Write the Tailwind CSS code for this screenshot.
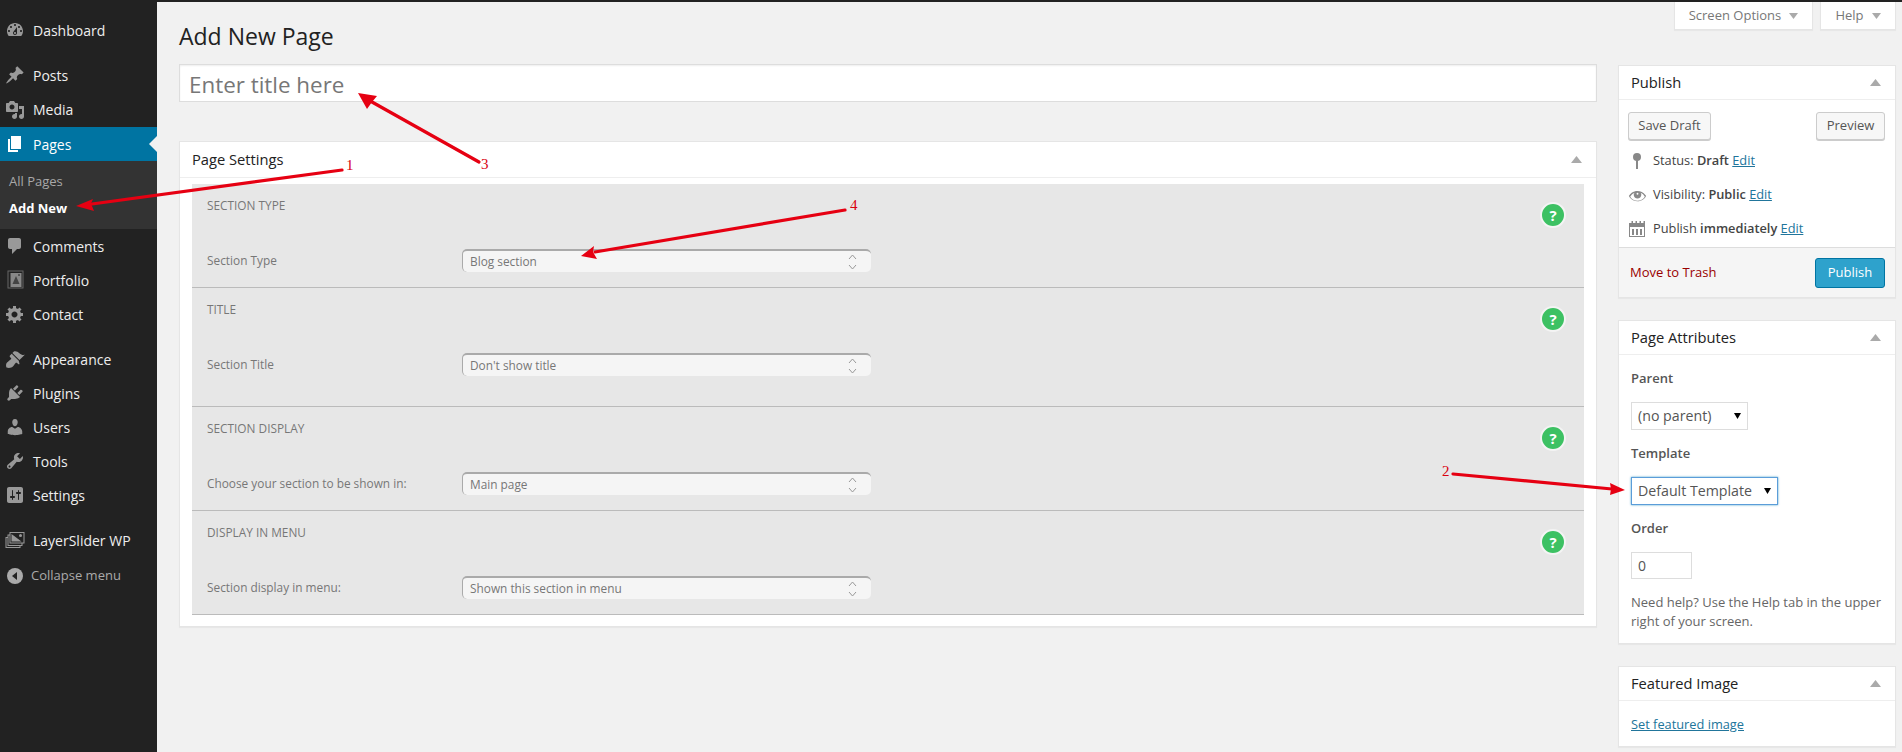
<!DOCTYPE html>
<html>
<head>
<meta charset="utf-8">
<script src="https://cdn.jsdelivr.net/npm/@tailwindcss/browser@4"></script>
</head>
<body class="m-0">
<div class="relative w-[1902px] h-[752px] overflow-hidden flex flex-col bg-[#f1f1f1] font-['Open_Sans',sans-serif] text-[13px] text-[#444]">
  <div class="h-[2px] bg-[#222] shrink-0"></div>
  <div class="flex flex-1 min-h-0">
    <!-- Sidebar -->
    <nav class="w-[157px] shrink-0 bg-[#222] text-[14px] text-[#eee] pt-[11px]">
      <div class="h-[34px] flex items-center"><span class="w-[33px] pl-[5px]"><svg class="w-[20px] h-[20px] fill-[#999]" viewBox="0 0 20 20"><path d="M3.76 16h12.48c1.1-1.37 1.76-3.11 1.76-5 0-4.42-3.58-8-8-8s-8 3.58-8 8c0 1.89.66 3.63 1.76 5zM10 4c.55 0 1 .45 1 1s-.45 1-1 1-1-.45-1-1 .45-1 1-1zM6 6c.55 0 1 .45 1 1s-.45 1-1 1-1-.45-1-1 .45-1 1-1zm8 0c.55 0 1 .45 1 1s-.45 1-1 1-1-.45-1-1 .45-1 1-1zm-5.37 5.55L12 7v6c0 1.1-.9 2-2 2s-2-.9-2-2c0-.57.24-1.08.63-1.45zM4 10c.55 0 1 .45 1 1s-.45 1-1 1-1-.45-1-1 .45-1 1-1zm12 0c.55 0 1 .45 1 1s-.45 1-1 1-1-.45-1-1 .45-1 1-1zm-5 3c0-.55-.45-1-1-1s-1 .45-1 1 .45 1 1 1 1-.45 1-1z" fill-rule="evenodd"/></svg></span>Dashboard</div>
      <div class="h-[11px]"></div>
      <div class="h-[34px] flex items-center"><span class="w-[33px] pl-[5px]"><svg class="w-[20px] h-[20px] fill-[#999]" viewBox="0 0 20 20"><path d="M10.44 3.02l1.82-1.82 6.36 6.35-1.83 1.82c-1.05-.68-2.48-.57-3.41.36l-.75.75c-.92.93-1.04 2.35-.35 3.41l-1.83 1.82-2.41-2.41-2.8 2.79c-.42.42-3.38 2.71-3.8 2.29s1.86-3.39 2.28-3.81l2.79-2.79L4.1 9.36l1.83-1.82c1.05.69 2.48.57 3.4-.36l.75-.75c.93-.92 1.05-2.35.36-3.41z"/></svg></span>Posts</div>
      <div class="h-[35px] flex items-center"><span class="w-[33px] pl-[5px]"><svg class="w-[20px] h-[20px] fill-[#999]" viewBox="0 0 20 20"><path fill-rule="evenodd" d="M13 11V4c0-.55-.45-1-1-1h-1.67L9 1H5L3.67 3H2c-.55 0-1 .45-1 1v7c0 .55.45 1 1 1h10c.55 0 1-.45 1-1zM7 4.5c1.38 0 2.5 1.12 2.5 2.5S8.38 9.5 7 9.5 4.5 8.38 4.5 7 5.62 4.5 7 4.5zM14 6h5v10.5c0 1.38-1.12 2.5-2.5 2.5S14 17.88 14 16.5s1.12-2.5 2.5-2.5c.17 0 .34.02.5.05V9h-3V6zm-4 8.05V13h2v3.5c0 1.38-1.12 2.5-2.5 2.5S7 17.88 7 16.5 8.12 14 9.5 14c.17 0 .34.02.5.05z"/></svg></span>Media</div>
      <div class="relative h-[34px] flex items-center bg-[#0074a2] text-white"><span class="w-[33px] pl-[5px]"><svg class="w-[20px] h-[20px] fill-white" viewBox="0 0 20 20"><path d="M6 15V2h10v13H6zm-1 1h8v2H3V5h2v11z"/></svg></span>Pages
        <span class="absolute right-0 top-[9px] border-y-[8px] border-r-[8px] border-y-transparent border-r-[#f1f1f1]"></span></div>
      <div class="bg-[#333] h-[68px] pt-[8px] text-[13px] pl-[9px]">
        <div class="h-[26px] leading-[24px] text-[#a8a8a8]">All Pages</div>
        <div class="h-[26px] leading-[26px] font-bold text-white">Add New</div>
      </div>
      <div class="h-[34px] flex items-center"><span class="w-[33px] pl-[5px]"><svg class="w-[20px] h-[20px] fill-[#999]" viewBox="0 0 20 20"><path d="M5 2h9c1.1 0 2 .9 2 2v7c0 1.1-.9 2-2 2h-2l-5 5v-5H5c-1.1 0-2-.9-2-2V4c0-1.1.9-2 2-2z"/></svg></span>Comments</div>
      <div class="h-[34px] flex items-center"><span class="w-[33px] pl-[5px]"><svg class="w-[20px] h-[20px]" viewBox="0 0 20 20"><rect x="3" y="1" width="15" height="17" fill="none" stroke="#666" stroke-width="1"/><rect x="5.500" y="3" width="11" height="14" fill="#888"/><path fill="#444" d="M7.500 14l3.500-8 3.500 8z"/><circle cx="14" cy="5" r="1" fill="#444"/></svg></span>Portfolio</div>
      <div class="h-[34px] flex items-center"><span class="w-[33px] pl-[5px]"><svg class="w-[20px] h-[20px] fill-[#999]" viewBox="0 0 20 20"><path fill-rule="evenodd" d="M18 12h-2.180c-.17.7-.44 1.35-.81 1.930l1.540 1.540-2.100 2.100-1.540-1.540c-.58.36-1.230.63-1.910.79V19H8v-2.180c-.68-.16-1.330-.43-1.910-.79l-1.540 1.540-2.120-2.120 1.540-1.540c-.36-.58-.63-1.230-.79-1.910H1V9.030h2.170c.16-.7.44-1.350.8-1.940L2.430 5.550l2.100-2.100 1.540 1.540c.58-.37 1.240-.64 1.930-.81V2h3v2.180c.68.16 1.330.43 1.910.79l1.540-1.540 2.120 2.120-1.540 1.540c.36.59.64 1.240.8 1.940H18V12zm-8.500 1.500c1.660 0 3-1.340 3-3s-1.340-3-3-3-3 1.340-3 3 1.340 3 3 3z"/></svg></span>Contact</div>
      <div class="h-[11px]"></div>
      <div class="h-[34px] flex items-center"><span class="w-[33px] pl-[5px]"><svg class="w-[20px] h-[20px] fill-[#999]" viewBox="0 0 20 20"><path d="M14.480 11.060L7.410 3.990l1.500-1.500c.5-.56 2.300-.47 3.510.32 1.210.8 1.430 1.280 2.910 2.100 1.180.64 2.450 1.260 4.450.85zm-.71.71L6.700 4.700 4.930 6.470c-.39.39-.39 1.020 0 1.410l1.060 1.060c.39.39.39 1.030 0 1.420-.6.6-1.430 1.110-2.210 1.690-.35.26-.7.53-1.010.84C1.430 13.230.5 15.700 1.500 18.500c2.790 1 5.270.07 6.610-1.270.31-.31.58-.66.84-1.010.58-.78 1.090-1.610 1.690-2.210.39-.39 1.030-.39 1.420 0l1.060 1.060c.39.39 1.020.39 1.410 0z"/></svg></span>Appearance</div>
      <div class="h-[34px] flex items-center"><span class="w-[33px] pl-[5px]"><svg class="w-[20px] h-[20px] fill-[#999]" viewBox="0 0 20 20"><path d="M13.110 4.360L9.870 7.600 8 5.730l3.240-3.240c.35-.34 1.050-.2 1.560.32.52.51.66 1.210.31 1.550zm-8 1.770l.91-1.120 9.010 9.010-1.190.84c-.71.71-2.630 1.160-3.820 1.160H6.140L4.900 17.260c-.59.59-1.540.59-2.120 0-.59-.58-.59-1.530 0-2.120l1.240-1.240v-3.880c0-1.130.4-3.190 1.090-3.890zm7.260 3.970l3.240-3.240c.34-.35 1.040-.21 1.550.31.52.51.66 1.210.31 1.550l-3.240 3.250z"/></svg></span>Plugins</div>
      <div class="h-[34px] flex items-center"><span class="w-[33px] pl-[5px]"><svg class="w-[20px] h-[20px] fill-[#999]" viewBox="0 0 20 20"><path d="M10 9.250c-2.270 0-2.730-3.440-2.730-3.440C7 4.020 7.820 2 9.970 2c2.160 0 2.980 2.020 2.710 3.810 0 0-.41 3.440-2.680 3.440zm0 2.570L12.720 10c2.390 0 4.520 2.330 4.520 4.530v2.490s-3.650 1.130-7.240 1.130c-3.650 0-7.240-1.130-7.240-1.130v-2.490c0-2.250 1.940-4.480 4.470-4.480z"/></svg></span>Users</div>
      <div class="h-[34px] flex items-center"><span class="w-[33px] pl-[5px]"><svg class="w-[20px] h-[20px] fill-[#999]" viewBox="0 0 20 20"><path fill-rule="evenodd" d="M16.680 9.770c-1.340 1.340-3.300 1.670-4.950.99l-5.410 6.520c-.99.99-2.590.99-3.580 0s-.99-2.590 0-3.570l6.520-5.420c-.68-1.650-.35-3.610.99-4.950 1.280-1.280 3.120-1.620 4.720-1.060l-2.890 2.890 2.820 2.820 2.860-2.870c.53 1.580.18 3.390-1.080 4.650zM3.810 16.210c.4.39 1.040.39 1.430 0 .4-.4.4-1.040 0-1.430-.39-.4-1.030-.4-1.430 0-.39.39-.39 1.030 0 1.430z"/></svg></span>Tools</div>
      <div class="h-[34px] flex items-center"><span class="w-[33px] pl-[5px]"><svg class="w-[20px] h-[20px] fill-[#999]" viewBox="0 0 20 20"><path fill-rule="evenodd" d="M18 16V4c0-1.100-.9-2-2-2H4c-1.100 0-2 .9-2 2v12c0 1.100.9 2 2 2h12c1.100 0 2-.9 2-2zM8 11h1c.55 0 1 .45 1 1s-.45 1-1 1H8v1.500c0 .28-.22.5-.5.5s-.5-.22-.5-.5V13H6c-.55 0-1-.45-1-1s.45-1 1-1h1V5.500c0-.28.22-.5.5-.5s.5.22.5.5V11zm5-2h-1c-.55 0-1-.45-1-1s.45-1 1-1h1V5.500c0-.28.22-.5.5-.5s.5.22.5.5V7h1c.55 0 1 .45 1 1s-.45 1-1 1h-1v5.500c0 .28-.22.5-.5.5s-.5-.22-.5-.5V9z"/></svg></span>Settings</div>
      <div class="h-[11px]"></div>
      <div class="h-[34px] flex items-center"><span class="w-[33px] pl-[5px]"><svg class="w-[20px] h-[20px] fill-none stroke-[#999]" viewBox="0 0 20 20" stroke-width="1"><rect x="1" y="7.500" width="14" height="10" fill="#222"/><rect x="3" y="5" width="14" height="10.500" fill="#222"/><rect x="5" y="2.500" width="14" height="10.500" fill="#222"/><path fill="#999" stroke="none" d="M6.500 4l10 7.500h-10z"/><circle cx="15.500" cy="5.500" r="1.500" fill="#999" stroke="none"/></svg></span>LayerSlider WP</div>
      <div class="h-[34px] flex items-center text-[13px] text-[#aaa] pt-[4px]"><span class="w-[31px] pl-[7px]"><svg class="w-[16px] h-[16px]" viewBox="0 0 16 16"><circle cx="8" cy="8" r="8" fill="#aaa"/><path d="M10 4v8L5 8z" fill="#222"/></svg></span>Collapse menu</div>
    </nav>

    <!-- Main -->
    <main class="flex-1 min-w-0 pl-[22px] pr-[6px]">
      <header class="h-[62px] flex justify-between items-start">
        <h1 class="text-[23px] leading-[29px] mt-[20px] text-[#222]">Add New Page</h1>
        <div class="flex gap-[7px]">
          <div class="w-[139px] h-[28px] pt-px bg-white border-x border-b border-[#e5e5e5] shadow-[0_1px_1px_rgba(0,0,0,0.04)] flex items-center justify-center gap-[8px] text-[#777]">Screen Options <svg class="w-[9px] h-[6px] fill-[#aaa]" viewBox="0 0 9 6"><path d="M0 0h9L4.500 6z"/></svg></div>
          <div class="w-[76px] h-[28px] pt-px bg-white border-x border-b border-[#e5e5e5] shadow-[0_1px_1px_rgba(0,0,0,0.04)] flex items-center justify-center gap-[8px] text-[#777]">Help <svg class="w-[9px] h-[6px] fill-[#aaa]" viewBox="0 0 9 6"><path d="M0 0h9L4.500 6z"/></svg></div>
        </div>
      </header>
      <div class="flex gap-[21px] items-start">
        <!-- Left column -->
        <div class="w-[1418px] shrink-0">
          <div class="h-[38px] bg-white border border-[#ddd] shadow-[inset_0_1px_2px_rgba(0,0,0,0.07)] flex items-center pl-[9px] pt-[3px] text-[22.400px] text-[#777]">Enter title here</div>
          <section class="mt-[39px] h-[486px] bg-white border border-[#e5e5e5] shadow-[0_1px_1px_rgba(0,0,0,0.04)]">
            <div class="h-[36px] border-b border-[#eee] flex items-center justify-between pl-[12px] pr-[14px] text-[14.700px] text-[#222]">Page Settings <svg class="w-[11px] h-[7px] fill-[#aaa]" viewBox="0 0 11 7"><path d="M0 7L5.500 0 11 7z"/></svg></div>
            <div class="mx-[12px] mt-[6px] bg-[#e7e7e7] text-[11.850px] text-[#777]">
              <div class="h-[104px] border-b border-[#bbb] flex justify-between items-start pl-[15px] pr-[18px]">
                <div>
                  <div class="h-[18px] leading-[18px] mt-[12px]">SECTION TYPE</div>
                  <div class="mt-[35px] flex items-center">
                    <span class="w-[255px]">Section Type</span>
                    <div class="w-[409px] h-[23px] pl-[7px] flex items-center justify-between pr-[14px] bg-[#f5f5f5] rounded-[5px] border-t-2 border-l border-[#aaa]">Blog section <svg class="w-[9px] h-[16px] stroke-[#999] fill-none" viewBox="0 0 9 16"><path d="M1 5l3.500-4L8 5M1 11l3.500 4L8 11"/></svg></div>
                  </div>
                </div>
                <div class="mt-[18px] w-[26px] h-[26px] rounded-full bg-[#3dc163] border-2 border-[#f4f4f4] flex items-center justify-center text-white font-bold text-[15px]">?</div>
              </div>
              <div class="h-[119px] border-b border-[#bbb] flex justify-between items-start pl-[15px] pr-[18px]">
                <div>
                  <div class="h-[18px] leading-[18px] mt-[12px]">TITLE</div>
                  <div class="mt-[35px] flex items-center">
                    <span class="w-[255px]">Section Title</span>
                    <div class="w-[409px] h-[23px] pl-[7px] flex items-center justify-between pr-[14px] bg-[#f5f5f5] rounded-[5px] border-t-2 border-l border-[#aaa]">Don't show title <svg class="w-[9px] h-[16px] stroke-[#999] fill-none" viewBox="0 0 9 16"><path d="M1 5l3.500-4L8 5M1 11l3.500 4L8 11"/></svg></div>
                  </div>
                </div>
                <div class="mt-[18px] w-[26px] h-[26px] rounded-full bg-[#3dc163] border-2 border-[#f4f4f4] flex items-center justify-center text-white font-bold text-[15px]">?</div>
              </div>
              <div class="h-[104px] border-b border-[#bbb] flex justify-between items-start pl-[15px] pr-[18px]">
                <div>
                  <div class="h-[18px] leading-[18px] mt-[12px]">SECTION DISPLAY</div>
                  <div class="mt-[35px] flex items-center">
                    <span class="w-[255px]">Choose your section to be shown in:</span>
                    <div class="w-[409px] h-[23px] pl-[7px] flex items-center justify-between pr-[14px] bg-[#f5f5f5] rounded-[5px] border-t-2 border-l border-[#aaa]">Main page <svg class="w-[9px] h-[16px] stroke-[#999] fill-none" viewBox="0 0 9 16"><path d="M1 5l3.500-4L8 5M1 11l3.500 4L8 11"/></svg></div>
                  </div>
                </div>
                <div class="mt-[18px] w-[26px] h-[26px] rounded-full bg-[#3dc163] border-2 border-[#f4f4f4] flex items-center justify-center text-white font-bold text-[15px]">?</div>
              </div>
              <div class="h-[104px] border-b border-[#bbb] flex justify-between items-start pl-[15px] pr-[18px]">
                <div>
                  <div class="h-[18px] leading-[18px] mt-[12px]">DISPLAY IN MENU</div>
                  <div class="mt-[35px] flex items-center">
                    <span class="w-[255px]">Section display in menu:</span>
                    <div class="w-[409px] h-[23px] pl-[7px] flex items-center justify-between pr-[14px] bg-[#f5f5f5] rounded-[5px] border-t-2 border-l border-[#aaa]">Shown this section in menu <svg class="w-[9px] h-[16px] stroke-[#999] fill-none" viewBox="0 0 9 16"><path d="M1 5l3.500-4L8 5M1 11l3.500 4L8 11"/></svg></div>
                  </div>
                </div>
                <div class="mt-[18px] w-[26px] h-[26px] rounded-full bg-[#3dc163] border-2 border-[#f4f4f4] flex items-center justify-center text-white font-bold text-[15px]">?</div>
              </div>
            </div>
          </section>
        </div>

        <!-- Right column -->
        <aside class="w-[278px] shrink-0 mt-px flex flex-col gap-[22px]">
          <section class="h-[233px] bg-white border border-[#e5e5e5] shadow-[0_1px_1px_rgba(0,0,0,0.04)] flex flex-col">
            <div class="h-[34px] shrink-0 border-b border-[#eee] flex items-center justify-between pl-[12px] pr-[14px] text-[14.700px] text-[#222]">Publish <svg class="w-[11px] h-[7px] fill-[#aaa]" viewBox="0 0 11 7"><path d="M0 7L5.500 0 11 7z"/></svg></div>
            <div class="flex justify-between pl-[9px] pr-[10px] pt-[12px]">
              <div class="w-[83px] h-[28px] rounded-[3px] border border-[#ccc] bg-[#f7f7f7] flex items-center justify-center text-[#555] shadow-[0_1px_0_#ccc]">Save Draft</div>
              <div class="w-[69px] h-[28px] rounded-[3px] border border-[#ccc] bg-[#f7f7f7] flex items-center justify-center text-[#555] shadow-[0_1px_0_#ccc]">Preview</div>
            </div>
            <div class="mt-[4px] h-[34px] flex items-center text-[12.800px]"><span class="w-[34px] pl-[9px] block"><svg class="w-[18px] h-[18px] fill-[#888]" viewBox="0 0 18 18"><circle cx="9" cy="5" r="4"/><rect x="8" y="6" width="2" height="11"/></svg></span>Status:&nbsp;<b class="font-semibold">Draft</b>&nbsp;<a class="underline text-[#21759b]">Edit</a></div>
            <div class="h-[34px] flex items-center text-[12.800px]"><span class="w-[34px] pl-[9px] block"><svg class="w-[19px] h-[19px] fill-[#888]" viewBox="0 0 20 20"><path fill-rule="evenodd" d="M18.300 9.500C15 4.900 8.500 3.800 3.900 7.200c-1.200.9-2.200 2.100-3 3.400.2.4.5.8.8 1.200 3.300 4.600 9.600 5.600 14.200 2.400.9-.7 1.700-1.400 2.400-2.400.3-.4.5-.8.8-1.200-.3-.4-.5-.8-.8-1.100zm-8.300-2.300c.6 0 1 .4 1 1s-.4 1-1 1-1-.4-1-1 .4-1 1-1zm0 8.300c-3.100 0-6-1.600-7.700-4.200C3.500 9 5.100 7.800 7 7c-.6.6-1 1.400-1 2.200 0 2.200 1.800 4 4 4s4-1.800 4-4c0-.8-.3-1.600-.7-2.200 1.900.8 3.400 2 4.400 4.300-1.700 2.600-4.600 4.200-7.700 4.200z"/></svg></span>Visibility:&nbsp;<b class="font-semibold">Public</b>&nbsp;<a class="underline text-[#21759b]">Edit</a></div>
            <div class="h-[34px] flex items-center text-[12.800px]"><span class="w-[34px] pl-[9px] block"><svg class="w-[18px] h-[18px] fill-[#888]" viewBox="0 0 18 18"><path fill-rule="evenodd" d="M1 3h2.500V1h1.500v2h2.500V1H9v2h2.500V1H13v2h2.500V1H17v16H1V3zm1 4v9h14V7H2z"/><rect x="4" y="9" width="2" height="6"/><rect x="8" y="9" width="2" height="6"/><rect x="12" y="9" width="2" height="6"/></svg></span>Publish&nbsp;<b class="font-semibold">immediately</b>&nbsp;<a class="underline text-[#21759b]">Edit</a></div>
            <div class="mt-auto h-[50px] bg-[#f5f5f5] border-t border-[#ddd] flex items-center justify-between pl-[11px] pr-[10px]">
              <a class="text-[#900]">Move to Trash</a>
              <div class="w-[70px] h-[30px] rounded-[3px] bg-[#2ea2cc] border border-[#0074a2] flex items-center justify-center text-white">Publish</div>
            </div>
          </section>
          <section class="h-[324px] bg-white border border-[#e5e5e5] shadow-[0_1px_1px_rgba(0,0,0,0.04)]">
            <div class="h-[34px] border-b border-[#eee] flex items-center justify-between pl-[12px] pr-[14px] text-[14.700px] text-[#222]">Page Attributes <svg class="w-[11px] h-[7px] fill-[#aaa]" viewBox="0 0 11 7"><path d="M0 7L5.500 0 11 7z"/></svg></div>
            <div class="pl-[12px] pr-[10px]">
              <div class="h-[20px] leading-[20px] mt-[13px] font-semibold text-[#555]">Parent</div>
              <div class="mt-[14px] w-[117px] h-[28px] border border-[#ddd] bg-white flex items-center justify-between pl-[6px] pr-[6px] text-[14.200px] text-[#555]">(no parent) <svg class="w-[7px] h-[6px] fill-black" viewBox="0 0 7 6"><path d="M0 0h7L3.500 6z"/></svg></div>
              <div class="h-[20px] leading-[20px] mt-[13px] font-semibold text-[#555]">Template</div>
              <div class="mt-[14px] w-[147px] h-[28px] border border-[#5b9dd9] shadow-[0_0_2px_rgba(30,140,190,0.8)] bg-white flex items-center justify-between pl-[6px] pr-[6px] text-[14.200px] text-[#555]">Default Template <svg class="w-[7px] h-[6px] fill-black" viewBox="0 0 7 6"><path d="M0 0h7L3.500 6z"/></svg></div>
              <div class="h-[20px] leading-[20px] mt-[13px] font-semibold text-[#555]">Order</div>
              <div class="mt-[14px] w-[61px] h-[27px] border border-[#ddd] bg-white flex items-center pl-[6px] text-[14px] text-[#555]">0</div>
              <p class="mt-[14px] leading-[19px] text-[#666]">Need help? Use the Help tab in the upper right of your screen.</p>
            </div>
          </section>
          <section class="h-[81px] bg-white border border-[#e5e5e5] shadow-[0_1px_1px_rgba(0,0,0,0.04)]">
            <div class="h-[34px] border-b border-[#eee] flex items-center justify-between pl-[12px] pr-[14px] text-[14.700px] text-[#222]">Featured Image <svg class="w-[11px] h-[7px] fill-[#aaa]" viewBox="0 0 11 7"><path d="M0 7L5.500 0 11 7z"/></svg></div>
            <a class="block pl-[12px] mt-[14px] underline text-[#21759b] text-[12.800px]">Set featured image</a>
          </section>
        </aside>
      </div>
    </main>
  </div>

  <!-- Annotations -->
  <svg class="absolute left-0 top-0 pointer-events-none" width="1902" height="752" viewBox="0 0 1902 752">
    <g stroke="#e60012" stroke-width="3.200" stroke-linecap="round" fill="#e60012">
      <path d="M342 170L92 204" />
      <path d="M479 162L372 102" />
      <path d="M845 210L595 252" />
      <path d="M1453 474L1612 489" />
      <path stroke="none" d="M76 206L93 199L91 203.500L94 211z"/>
      <path stroke="none" d="M358 93L377 96L372 102L367 109z"/>
      <path stroke="none" d="M581 256L594 246L593 252L597 259z"/>
      <path stroke="none" d="M1625 490L1610 483L1611 489L1610 495z"/>
    </g>
  </svg>
  <span class="absolute left-[346px] top-[157px] font-['Liberation_Serif',serif] text-[15px] leading-[17px] text-[#d9000f]">1</span>
  <span class="absolute left-[1442px] top-[463px] font-['Liberation_Serif',serif] text-[15px] leading-[17px] text-[#d9000f]">2</span>
  <span class="absolute left-[481px] top-[156px] font-['Liberation_Serif',serif] text-[15px] leading-[17px] text-[#d9000f]">3</span>
  <span class="absolute left-[850px] top-[197px] font-['Liberation_Serif',serif] text-[15px] leading-[17px] text-[#d9000f]">4</span>
</div>
</body>
</html>
